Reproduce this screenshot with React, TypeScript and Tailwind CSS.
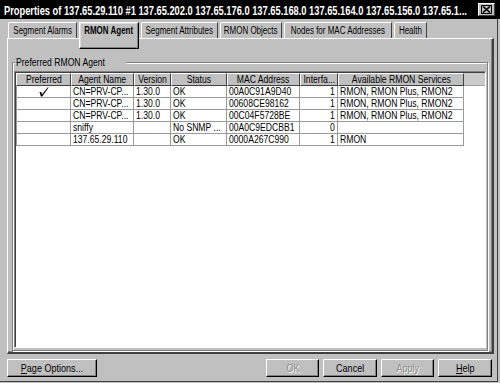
import React from "react"

type Row = {
  pref: boolean
  name: string
  ver: string
  status: string
  mac: string
  ifc: string
  svc: string
}

const rows: Row[] = [
  { pref: true, name: "CN=PRV-CP...", ver: "1.30.0", status: "OK", mac: "00A0C91A9D40", ifc: "1", svc: "RMON, RMON Plus, RMON2" },
  { pref: false, name: "CN=PRV-CP...", ver: "1.30.0", status: "OK", mac: "00608CE98162", ifc: "1", svc: "RMON, RMON Plus, RMON2" },
  { pref: false, name: "CN=PRV-CP...", ver: "1.30.0", status: "OK", mac: "00C04F5728BE", ifc: "1", svc: "RMON, RMON Plus, RMON2" },
  { pref: false, name: "sniffy", ver: "", status: "No SNMP ...", mac: "00A0C9EDCBB1", ifc: "0", svc: "" },
  { pref: false, name: "137.65.29.110", ver: "", status: "OK", mac: "0000A267C990", ifc: "1", svc: "RMON" },
]

const columns = [
  { label: "Preferred", w: "w-[55px]" },
  { label: "Agent Name", w: "w-[63px]" },
  { label: "Version", w: "w-[37px]" },
  { label: "Status", w: "w-[56px]" },
  { label: "MAC Address", w: "w-[73px]" },
  { label: "Interfa...", w: "w-[38px]" },
  { label: "Available RMON Services", w: "w-[126px]" },
]

const tabs = [
  { label: "Segment Alarms", w: "w-[69px]" },
  { label: "RMON Agent", w: "w-[60px]", active: true },
  { label: "Segment Attributes", w: "w-[77px]" },
  { label: "RMON Objects", w: "w-[62px]" },
  { label: "Nodes for MAC Addresses", w: "w-[108px]" },
  { label: "Health", w: "w-[33px]" },
]

// the original UI uses a narrow Helvetica; squeeze Liberation Sans to match
function N({ children, o = "origin-center" }: { children: React.ReactNode; o?: string }) {
  return <span className={`inline-block whitespace-nowrap scale-x-[0.82] ${o}`}>{children}</span>
}

function Check() {
  return (
    <svg width="10" height="10" viewBox="0 0 10 10">
      <path d="M0.5 5 L2.3 5 L3 7.6 L8.6 0.6 L9.6 0.6 L3.2 9.4 L1.9 9.4 Z" fill="#000" />
    </svg>
  )
}

function Button({ label, w, disabled, u }: { label: string; w: string; disabled?: boolean; u?: boolean }) {
  return (
    <div
      className={`${w} h-[18px] flex items-center justify-center bg-[#c0c0c0] border-t border-l border-t-white border-l-white border-r border-b border-r-black border-b-black shadow-[inset_-1px_-1px_0_#808080] text-[11px] ${
        disabled ? "text-[#8a8a8a] [text-shadow:1px_1px_0_#fff]" : "text-black"
      }`}
    >
      <N>
        {u ? (
          <>
            <span className="underline">{label[0]}</span>
            {label.slice(1)}
          </>
        ) : (
          label
        )}
      </N>
    </div>
  )
}

export default function App() {
  return (
    <div className="w-[500px] h-[383px] bg-[#c0c0c0] overflow-hidden font-['Liberation_Sans',Arial,sans-serif] text-black">
      <div className="w-[498px] h-[382px] border-r border-b border-[#404040] flex flex-col">
        {/* title bar */}
        <div className="w-[500px] h-[19px] bg-black flex items-center pl-[4px] pr-[5px] gap-[4px]">
          <div className="flex-1 min-w-0">
            <span className="inline-block origin-left scale-x-[0.775] text-white font-bold text-[12px] leading-none whitespace-nowrap">
              Properties of 137.65.29.110 #1 137.65.202.0 137.65.176.0 137.65.168.0 137.65.164.0 137.65.156.0 137.65.1...
            </span>
          </div>
          <div className="w-[17px] h-[13px] bg-[#c0c0c0] border border-white border-r-[#404040] border-b-[#404040] flex items-center justify-center">
            <div className="w-[11px] h-[9px] border border-black flex items-center justify-center">
              <svg width="9" height="7" viewBox="0 0 9 7">
                <path d="M1 0.5 L8 6.5 M8 0.5 L1 6.5" stroke="#000" strokeWidth="1.6" />
              </svg>
            </div>
          </div>
        </div>

        {/* tabs */}
        <div className="mt-[3px] h-[16px] flex items-start gap-[2px] pl-[8px] relative z-10">
          {tabs.map((t) =>
            t.active ? (
              <div
                key={t.label}
                className={`${t.w} h-[27px] bg-[#c0c0c0] border-t border-l border-white border-r border-b border-r-black border-b-black shadow-[inset_-1px_-1px_0_#808080,inset_1px_1px_0_#dcdcdc] flex justify-center pt-[2px] text-[10px] leading-[12px] font-bold`}
              >
                <span className="inline-block whitespace-nowrap scale-x-[0.8]">{t.label}</span>
              </div>
            ) : (
              <div
                key={t.label}
                className={`${t.w} h-[16px] bg-[#c0c0c0] border-t border-l border-white border-r border-r-[#404040] rounded-tl-[2px] flex justify-center pt-[2px] text-[10px] leading-[12px]`}
              >
                <span className="inline-block whitespace-nowrap scale-x-[0.8]">{t.label}</span>
              </div>
            )
          )}
        </div>

        {/* panel */}
        <div className="ml-[7px] w-[487px] h-[316px] border-t border-l border-white border-r-2 border-b-2 border-r-[#404040] border-b-[#404040] shadow-[inset_-1px_-1px_0_#808080]">
          <div className="relative ml-[4px] mt-[23px] w-[476px] h-[289px] border border-[#808080] shadow-[inset_1px_1px_0_#fff,1px_1px_0_#fff]">
            <span className="absolute left-[2px] top-[-7px] px-[1px] bg-[#c0c0c0] text-[10.5px] leading-[12px] flex">
              <N o="origin-left">Preferred RMON Agent</N>
            </span>
            <div className="ml-[1px] mt-[8px] w-[472px] h-[277px] border border-[#808080] border-b-white border-r-white">
              <div className="w-[470px] h-[275px] border-t border-l border-[#404040] bg-white">
                {/* header */}
                <div className="flex h-[13px]">
                  {columns.map((c) => (
                    <div
                      key={c.label}
                      className={`${c.w} h-[13px] bg-[#c0c0c0] border-t border-l border-white border-r border-b border-r-[#404040] border-b-[#404040] flex items-center justify-center text-[10.5px] leading-none`}
                    >
                      <N>{c.label}</N>
                    </div>
                  ))}
                  <div className="flex-1 h-[13px] bg-[#cbcbcb] border-b border-[#a0a0a0]" />
                </div>
                {/* rows */}
                {rows.map((r, i) => (
                  <div key={i} className="flex h-[12px] text-[10.5px] leading-none">
                    <div className="w-[55px] border-l border-r border-b border-[#9a9a9a] flex items-center justify-center">
                      {r.pref && <Check />}
                    </div>
                    <div className="w-[63px] border-r border-b border-[#9a9a9a] flex items-center pl-[2px] overflow-hidden">
                      <N o="origin-left">{r.name}</N>
                    </div>
                    <div className="w-[37px] border-r border-b border-[#9a9a9a] flex items-center pl-[2px] overflow-hidden">
                      <N o="origin-left">{r.ver}</N>
                    </div>
                    <div className="w-[56px] border-r border-b border-[#9a9a9a] flex items-center pl-[2px] overflow-hidden">
                      <N o="origin-left">{r.status}</N>
                    </div>
                    <div className="w-[73px] border-r border-b border-[#9a9a9a] flex items-center pl-[2px] overflow-hidden">
                      <N o="origin-left">{r.mac}</N>
                    </div>
                    <div className="w-[38px] border-r border-b border-[#9a9a9a] flex items-center justify-end pr-[2px]">
                      <N o="origin-right">{r.ifc}</N>
                    </div>
                    <div className="w-[126px] border-r border-b border-[#9a9a9a] flex items-center pl-[2px] overflow-hidden">
                      <N o="origin-left">{r.svc}</N>
                    </div>
                  </div>
                ))}
              </div>
            </div>
          </div>
        </div>

        {/* buttons */}
        <div className="mt-[5px] flex items-center pl-[7px] pr-[5px]">
          <Button label="Page Options..." w="w-[90px]" u />
          <div className="flex-1" />
          <div className="flex gap-[4px]">
            <Button label="OK" w="w-[53px]" disabled />
            <Button label="Cancel" w="w-[54px]" />
            <Button label="Apply" w="w-[53px]" disabled />
            <Button label="Help" w="w-[54px]" u />
          </div>
        </div>
      </div>
    </div>
  )
}
